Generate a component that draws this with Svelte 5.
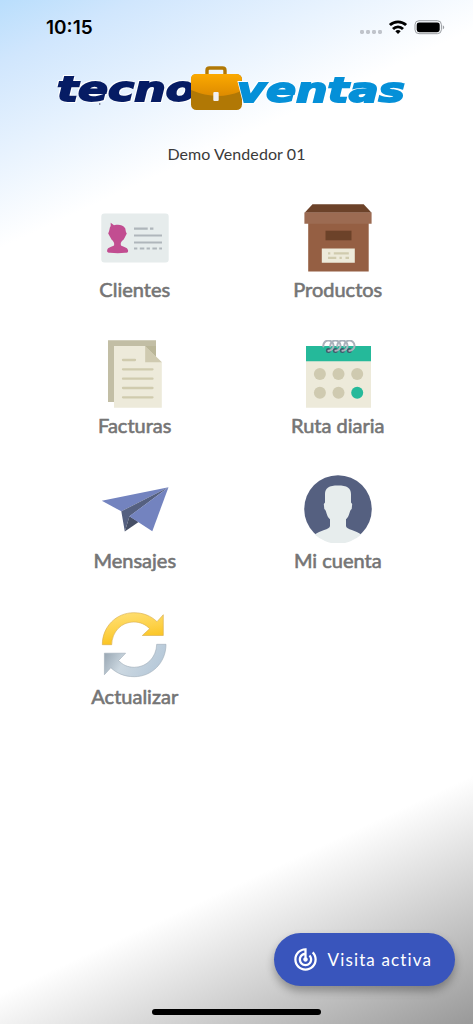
<script>
  const items = [
    { id: "clientes", label: "Clientes" },
    { id: "productos", label: "Productos" },
    { id: "facturas", label: "Facturas" },
    { id: "ruta", label: "Ruta diaria" },
    { id: "mensajes", label: "Mensajes" },
    { id: "cuenta", label: "Mi cuenta" },
    { id: "actualizar", label: "Actualizar" }
  ];

  const user = "Demo Vendedor 01";
  const rings = [24.4, 31.4, 38.4, 45.4];
</script>

<style>
  :global(body) {
    margin: 0;
  }

  main {
    box-sizing: border-box;
    display: flex;
    flex-direction: column;
    width: 100%;
    height: 1024px;
    overflow: hidden;
    font-family: Lato, "Open Sans", sans-serif;
    background: linear-gradient(155.2deg, #b9defc 0%, #d0e6fd 5%, #fff 20%, #fff 80%, #999 100%);
  }

  .status {
    display: flex;
    align-items: center;
    height: 54px;
    padding: 0 28px 0 46px;
  }

  .time {
    flex: 1;
    font-family: Inter, sans-serif;
    font-size: 19px;
    font-weight: 600;
    letter-spacing: 0;
    color: #000;
  }

  .logo {
    display: block;
    width: 360px;
    height: 50px;
    margin: 9px 0 0 52px;
  }

  .logo text {
    font-family: "DejaVu Sans", sans-serif;
    font-size: 34.5px;
    font-weight: bold;
    font-style: italic;
    stroke-width: 1.8px;
    filter: drop-shadow(1px 1px 0 #fff) drop-shadow(-1px -1px 0 #fff);
  }

  .user {
    margin: 31px 0 0;
    line-height: 20px;
    font-size: 16px;
    letter-spacing: 0.08px;
    text-align: center;
    color: #3a3a3a;
  }

  .menu {
    display: grid;
    grid-template-columns: 202.5px 203.5px;
    grid-auto-rows: 135.6px;
    margin: 40px 0 0 33.5px;
  }

  .item {
    display: flex;
    flex-direction: column;
    align-items: center;
    padding: 0;
    border: none;
    background: none;
    font-family: inherit;
  }

  .item svg {
    width: 68px;
    height: 68px;
  }

  .item span {
    margin-top: 5px;
    line-height: 24px;
    font-size: 20px;
    color: #757575;
    -webkit-text-stroke: 0.6px #757575;
  }

  .visit {
    display: flex;
    align-items: center;
    align-self: flex-end;
    box-sizing: border-box;
    width: 181px;
    height: 53px;
    margin: auto 18px 0 0;
    padding: 0 0 0 17.5px;
    border: none;
    border-radius: 27px;
    background: #3955bc;
    color: #fff;
    font-family: inherit;
    font-size: 17px;
    letter-spacing: 1.15px;
    box-shadow: 0 5px 9px rgba(0, 0, 0, 0.3);
  }

  .visit svg {
    width: 27px;
    height: 27px;
    margin-right: 9px;
  }

  .home {
    flex: none;
    width: 169px;
    height: 6px;
    margin: 23px auto 9px;
    border-radius: 3px;
    background: #000;
  }
</style>

<main>
  <div class="status">
    <span class="time">10:15</span>
    <svg width="85" height="18" viewBox="0 0 85 18">
      <g fill="#c0c4cb">
        <rect x="0" y="12" width="4" height="4" rx="1.4" />
        <rect x="6" y="12" width="4" height="4" rx="1.4" />
        <rect x="12" y="12" width="4" height="4" rx="1.4" />
        <rect x="18" y="12" width="4" height="4" rx="1.4" />
      </g>
      <g fill="none" stroke="#000" stroke-width="2.8">
        <path d="M29.9 7.100a11.600 11.600 0 0 1 16.200 0" />
        <path d="M33 11a7 7 0 0 1 10 0" />
      </g>
      <path d="M38 16l-2.700-2.800a4 4 0 0 1 5.400 0z" />
      <rect x="55" y="2.700" width="26.400" height="13" rx="4" fill="none" stroke="#999ca1" />
      <rect x="56.700" y="4.400" width="23" height="9.800" rx="2.400" />
      <path d="M82.800 7.200c1.900.8 1.900 3.400 0 4.200z" fill="#999ca1" />
    </svg>
  </div>

  <svg class="logo" viewBox="52 63 360 50">
    <defs>
      <linearGradient id="leather" x1="0" y1="0" x2="0" y2="1">
        <stop offset="0" stop-color="#fba900" />
        <stop offset="1" stop-color="#de8b00" />
      </linearGradient>
    </defs>
    <text x="57" y="100.500" textLength="139" lengthAdjust="spacingAndGlyphs" fill="#061c64" stroke="#061c64">tecno</text>
    <rect x="99" y="103.300" width="1.400" height="1.400" fill="#667" />
    <path d="M207 76v-5.500q0-2.500 2.500-2.500h13q2.500 0 2.500 2.500v5.500" fill="none" stroke="#b17805" stroke-width="3.400" />
    <rect x="191" y="74" width="51" height="36" rx="5.500" fill="#b17805" />
    <path d="M191 90V79q0-5 5-5h40q5 0 6 5l-2 12.500q-23 9.500-49-1.500z" fill="url(#leather)" />
    <rect x="213.300" y="92" width="5.400" height="9" rx="1" fill="#f1eff0" />
    <text x="237" y="101.500" textLength="168" lengthAdjust="spacingAndGlyphs" fill="#0590d8" stroke="#0590d8">ventas</text>
  </svg>

  <p class="user">{user}</p>

  <div class="menu">
    {#each items as { id, label }}
      <button class="item">
        <svg viewBox="0 0 68 68">
          {#if id === "clientes"}
            <rect x="0.300" y="9.500" width="67.400" height="49" rx="3" fill="#e6ecec" />
            <path
              d="M9.700 18.800l3.300 2.400c4-.7 8.300-1 11.200 3 .6 2 .3 3.500 1.600 5.300l-2.300 4.500c-.8 2.500-4.500 3.300-3.600 7.200 2 2 6.500 1.300 7.200 5.300.2 2-1 2.300-3 2.300-4.500.6-10 .6-15 0-2 0-3.200-.6-3-2.400.6-3.800 5-3.200 7-5.200.8-3.800-2.600-4.700-3.400-7.200L7.200 29.500c1.600-3 1-5.500 2.500-7.500z"
              fill="#c24d91" />
            <g stroke="#afb6bb" stroke-width="2.200">
              <path d="M33 24.700h13.700M49 24.700h3.400M33 31.500h28M33 38.500h28" />
              <path d="M33 44.500h3.300M38.800 44.500h4.500M45.600 44.500h3.300M51.400 44.500h4.500M58.200 44.500h2.800" />
            </g>
          {:else if id === "productos"}
            <path d="M8.500 .3h51.200l7.900 8.400H.6z" fill="#6c4229" />
            <path d="M4.200 19h60.500v48.600H4.200z" fill="#955f43" />
            <path d="M.4 8.400h67.200v11.300H.4z" fill="#9c6b52" />
            <path d="M21.500 26.700h26v9.600h-26z" fill="#6c4229" />
            <path d="M17.800 44.500h33v14.200h-33z" fill="#edeada" />
            <path d="M24 49.300h2.300M29.800 49.300h15M24 53.900h8.300M35.500 53.900h2.300M41.500 53.900h3.500" stroke="#d0cbae" stroke-width="2.200" />
          {:else if id === "facturas"}
            <path d="M7 .2h48V62H7z" fill="#c2bea5" />
            <path d="M13 6h31.200l16.600 16.300v45.400H13z" fill="#edeada" />
            <path d="M44.200 6v16.300h16.600z" fill="#cfcab0" />
            <path d="M44.200 6H55v10.600z" fill="#bab698" />
            <path
              d="M22 20h12M22 29.300h29.500M22 38.700h29.500M22 48h29.500M22 57.300h29.500"
              stroke="#d0cbae"
              stroke-width="2.300"
              stroke-linecap="round" />
          {:else if id === "ruta"}
            <path d="M2 6h65v61.700H2z" fill="#edeada" />
            <path d="M2 6h65v15.300H2z" fill="#25b99a" />
            {#each rings as x}
              <circle cx={x} cy="10.500" r="2.500" fill="#40596b" />
              <path d="M{x - 5} 6.500a5.100 5.100 0 1 1 5 4.200" fill="none" stroke="#aab2bb" stroke-width="2" stroke-linecap="round" />
            {/each}
            <g fill="#cfcab0">
              <circle cx="15.900" cy="34" r="6" />
              <circle cx="34.500" cy="34" r="6" />
              <circle cx="53.200" cy="34" r="6" />
              <circle cx="15.900" cy="52.700" r="6" />
              <circle cx="34.500" cy="52.700" r="6" />
              <circle cx="53.200" cy="52.700" r="6" fill="#25b99a" />
            </g>
          {:else if id === "mensajes"}
            <path d="M.8 25.800L67.500 12.200 20.300 36.300z" fill="#7383bf" />
            <path d="M67.500 12.200L20.300 36.300l3.500 20.200 4.700-15.200z" fill="#556080" />
            <path d="M28.500 41.300l-4.700 15.200 13.800-9.600z" fill="#464f66" />
            <path d="M67.500 12.200L51.300 56.200 28.300 41.300z" fill="#7383bf" />
          {:else if id === "cuenta"}
            <circle cx="34" cy="34" r="33.800" fill="#556080" />
            <path
              d="M34 10.500c9 0 13 2.500 13 8.500v8.500l1.200 1.500-.5 5c-2.500 1.500-2 7.500-5.700 10.200v6.800c0 3.500 10.500 4.500 15.200 8.500a33.800 33.800 0 0 1-46.400 0c4.700-4 15.200-5 15.200-8.500v-6.800c-3.700-2.700-3.200-8.700-5.700-10.200l-.5-5 1.200-1.500V19c0-6 4-8.500 13-8.500z"
              fill="#e7eded" />
          {:else}
            <defs>
              <linearGradient id="gold" x1="0" y1="0" x2="0.300" y2="1">
                <stop offset="0" stop-color="#ffe17a" />
                <stop offset="0.600" stop-color="#fdd147" />
                <stop offset="1" stop-color="#fac21c" />
              </linearGradient>
              <linearGradient id="silver" x1="0" y1="0.300" x2="1" y2="0.600">
                <stop offset="0" stop-color="#9aa8b4" />
                <stop offset="0.350" stop-color="#ccd8e1" />
                <stop offset="1" stop-color="#b4c7d8" />
              </linearGradient>
            </defs>
            <path
              d="M1.300 33.700C1.300 15.500 15.500 1.700 32.700 1.700c9.800 0 17.500 3.300 23.300 9l6.300-7v20.800h-21l7.300-6.800C44.500 13.300 39 11 32.700 11 20 11 11 21 10.700 33.700z"
              fill="url(#gold)"
              stroke="#d7ab4a"
              stroke-width="0.600" />
            <path
              d="M65 33.300C65 52 50.500 65.700 33.300 65.700c-9.800 0-17.500-3.300-23.500-9l-6.400 7V42.200h21.200l-7 7.300c4 4.500 9.400 6.800 15.700 6.800C46 56.300 55.400 46 55.700 33.300z"
              fill="url(#silver)"
              stroke="#9dabb7"
              stroke-width="0.600" />
          {/if}
        </svg>
        <span>{label}</span>
      </button>
    {/each}
  </div>

  <button class="visit">
    <svg viewBox="0 0 24 24" fill="#fff">
      <path
        d="M19.070 4.930l-1.410 1.410C19.100 7.790 20 9.790 20 12c0 4.420-3.580 8-8 8s-8-3.580-8-8c0-4.080 3.050-7.440 7-7.930v2.020C8.160 6.570 6 9.030 6 12c0 3.310 2.690 6 6 6s6-2.690 6-6c0-1.660-.67-3.160-1.760-4.240l-1.410 1.410C15.550 9.900 16 10.900 16 12c0 2.210-1.790 4-4 4s-4-1.790-4-4c0-1.860 1.280-3.410 3-3.860v2.140c-.6.350-1 .98-1 1.720 0 1.100.9 2 2 2s2-.9 2-2c0-.74-.4-1.380-1-1.720V2h-1C6.480 2 2 6.480 2 12s4.480 10 10 10 10-4.480 10-10c0-2.760-1.120-5.260-2.930-7.070z" />
    </svg>
    <span>Visita activa</span>
  </button>

  <div class="home"></div>
</main>
